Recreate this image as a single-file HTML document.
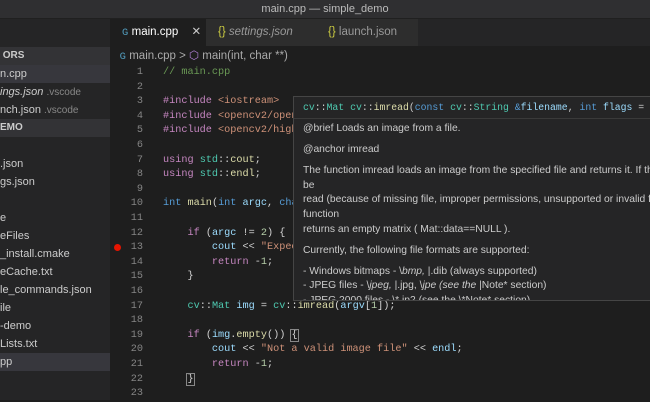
<!DOCTYPE html>
<html><head><meta charset="utf-8"><style>
*{margin:0;padding:0;box-sizing:border-box}
body{width:650px;height:400px;overflow:hidden;background:#1e1e1e;font-family:"Liberation Sans",sans-serif;position:relative;color:#ccc}
.abs{position:absolute}
#title{left:0;top:0;width:650px;height:19px;background:#2f2f31;color:#bbb;font-size:11px;text-align:center;line-height:19px;border-bottom:1px solid #202020}
#side{left:0;top:19px;width:110px;height:381px;background:#252526;overflow:hidden}
.si{position:absolute;left:0;width:110px;height:18px;line-height:18px;font-size:11px;color:#ccc;white-space:nowrap;padding-left:0}
.hdr{background:#333336;font-weight:bold;font-size:10px;color:#ccc}
.sel{background:#37373d}
.dim{color:#888;font-size:10px}
#tabs{left:110px;top:19px;width:540px;height:27px;background:#252526}
.tab{position:absolute;top:0;height:27px;line-height:27px;font-size:11.5px;white-space:nowrap}
#crumb{left:110px;top:46px;width:540px;height:20px;font-size:11.5px;line-height:20px;color:#aaa}
.code{position:absolute;left:110px;width:540px;height:14.6px;font-family:"Liberation Mono",monospace;font-size:10.2px;line-height:14.6px;white-space:pre;color:#d4d4d4}
.ln{display:inline-block;width:33px;text-align:right;color:#858585;margin-right:20px}
.c{color:#6a9955}.k{color:#c586c0}.s{color:#ce9178}.t{color:#4ec9b0}.b{color:#569cd6}.f{color:#dcdcaa}.v{color:#9cdcfe}.n{color:#b5cea8}
#hover{left:293px;top:96px;width:360px;height:205px;background:#252526;border:1px solid #454545;overflow:hidden}
#hover .sig{height:22px;line-height:22px;font-family:"Liberation Mono",monospace;font-size:9.8px;padding-left:9px;white-space:nowrap;border-bottom:1px solid #3a3a3a}
#hover p{font-size:10.3px;line-height:14.6px;padding-left:9px;white-space:nowrap;color:#ccc}
#hover p.g{margin-top:6.5px}
</style></head><body>
<div id="title" class="abs">main.cpp — simple_demo</div>
<div id="side" class="abs">
<div class="si hdr" style="top:28px">&nbsp;ORS</div>
<div class="si sel" style="top:46px">n.cpp</div>
<div class="si" style="top:64px"><i>ings.json</i> <span class="dim">.vscode</span></div>
<div class="si" style="top:82px">nch.json <span class="dim">.vscode</span></div>
<div class="si hdr" style="top:100px">EMO</div>
<div class="si" style="top:136px">.json</div>
<div class="si" style="top:154px">gs.json</div>
<div class="si" style="top:190px">e</div>
<div class="si" style="top:208px">eFiles</div>
<div class="si" style="top:226px">_install.cmake</div>
<div class="si" style="top:244px">eCache.txt</div>
<div class="si" style="top:262px">le_commands.json</div>
<div class="si" style="top:280px">ile</div>
<div class="si" style="top:298px">-demo</div>
<div class="si" style="top:316px">Lists.txt</div>
<div class="si sel" style="top:334px">pp</div>
</div>
<div id="tabs" class="abs">
<div class="tab" style="left:0;width:96px;background:#1e1e1e;color:#fff;padding-left:12px"><span style="color:#519aba">ɢ</span> main.cpp <span style="color:#ccc;margin-left:10px">✕</span></div>
<div class="tab" style="left:96px;width:110px;background:#2d2d2d;color:#999;padding-left:12px"><span style="color:#cbcb41">{}</span> <i>settings.json</i></div>
<div class="tab" style="left:206px;width:102px;background:#2d2d2d;color:#999;padding-left:12px"><span style="color:#cbcb41">{}</span> launch.json</div>
</div>
<div id="crumb" class="abs">&nbsp;&nbsp;&nbsp;<span style="color:#519aba">ɢ</span> main.cpp &gt; <span style="color:#b180d7">⬡</span> main(int, char **)</div>
<div class="code" style="top:66px"><span class="ln">1</span><span class="c">// main.cpp</span></div>
<div class="code" style="top:80.6px"><span class="ln">2</span></div>
<div class="code" style="top:95.2px"><span class="ln">3</span><span class="k">#include</span> <span class="s">&lt;iostream&gt;</span></div>
<div class="code" style="top:109.8px"><span class="ln">4</span><span class="k">#include</span> <span class="s">&lt;opencv2/open</span></div>
<div class="code" style="top:124.4px"><span class="ln">5</span><span class="k">#include</span> <span class="s">&lt;opencv2/high</span></div>
<div class="code" style="top:139px"><span class="ln">6</span></div>
<div class="code" style="top:153.6px"><span class="ln">7</span><span class="k">using</span> <span class="t">std</span>::<span class="f">cout</span>;</div>
<div class="code" style="top:168.2px"><span class="ln">8</span><span class="k">using</span> <span class="t">std</span>::<span class="f">endl</span>;</div>
<div class="code" style="top:182.8px"><span class="ln">9</span></div>
<div class="code" style="top:197.4px"><span class="ln">10</span><span class="b">int</span> <span class="f">main</span>(<span class="b">int</span> <span class="v">argc</span>, <span class="b">cha</span></div>
<div class="code" style="top:212px"><span class="ln">11</span></div>
<div class="code" style="top:226.6px"><span class="ln">12</span>    <span class="k">if</span> (<span class="v">argc</span> != <span class="n">2</span>) {</div>
<div class="code" style="top:241.2px"><span class="ln">13</span>        <span class="v">cout</span> &lt;&lt; <span class="s">"Expec</span></div>
<div class="code" style="top:255.8px"><span class="ln">14</span>        <span class="k">return</span> -<span class="n">1</span>;</div>
<div class="code" style="top:270.4px"><span class="ln">15</span>    }</div>
<div class="code" style="top:285px"><span class="ln">16</span></div>
<div class="code" style="top:299.6px"><span class="ln">17</span>    <span class="t">cv</span>::<span class="t">Mat</span> <span class="v">img</span> = <span class="t">cv</span>::<span class="f">imread</span>(<span class="v">argv</span>[<span class="n">1</span>]);</div>
<div class="code" style="top:314.2px"><span class="ln">18</span></div>
<div class="code" style="top:328.8px"><span class="ln">19</span>    <span class="k">if</span> (<span class="v">img</span>.<span class="f">empty</span>()) <span style="outline:1px solid #888">{</span></div>
<div class="code" style="top:343.4px"><span class="ln">20</span>        <span class="v">cout</span> &lt;&lt; <span class="s">"Not a valid image file"</span> &lt;&lt; <span class="v">endl</span>;</div>
<div class="code" style="top:358px"><span class="ln">21</span>        <span class="k">return</span> -<span class="n">1</span>;</div>
<div class="code" style="top:372.6px"><span class="ln">22</span>    <span style="outline:1px solid #888">}</span></div>
<div class="code" style="top:387.2px"><span class="ln">23</span></div>
<div class="abs" style="left:114px;top:244px;width:7px;height:7px;border-radius:50%;background:#e51400"></div>
<div id="hover" class="abs">
<div class="sig"><span class="t">cv</span>::<span class="t">Mat</span> <span class="t">cv</span>::<span class="f">imread</span>(<span class="b">const</span> <span class="t">cv</span>::<span class="t">String</span> <span class="b">&amp;</span><span class="v">filename</span>, <span class="b">int</span> <span class="v">flags</span> = <span class="n">1</span></div>
<p style="margin-top:3px">@brief Loads an image from a file.</p>
<p class="g">@anchor imread</p>
<p class="g">The function imread loads an image from the specified file and returns it. If the image cannot</p>
<p>be</p>
<p>read (because of missing file, improper permissions, unsupported or invalid format), the</p>
<p>function</p>
<p>returns an empty matrix ( Mat::data==NULL ).</p>
<p class="g">Currently, the following file formats are supported:</p>
<p class="g">- Windows bitmaps - \<i>bmp,</i> |.dib (always supported)</p>
<p>- JPEG files - \<i>jpeg,</i> |.jpg, \<i>jpe (see the</i> |Note* section)</p>
<p>- JPEG 2000 files - \*.jp2 (see the \*Note* section)</p>
</div>
</body></html>
